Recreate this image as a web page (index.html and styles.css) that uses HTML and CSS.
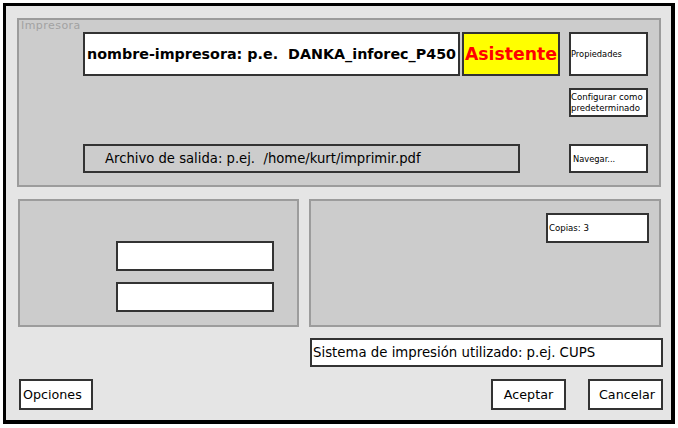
FILE: index.html
```html
<!DOCTYPE html>
<html lang="es">
<head>
<meta charset="utf-8">
<title>Imprimir</title>
<link rel="stylesheet" href="styles.css">
</head>
<body>
<div class="dialog">
  <div class="group printer">
    <div class="legend">Impresora</div>
    <div class="printer-body">
      <div class="printer-main">
        <div class="printer-top">
          <div class="box name">nombre-impresora: p.e.  DANKA_inforec_P450</div>
          <div class="box wizard">Asistente</div>
        </div>
        <div class="box file">Archivo de salida: p.ej.  /home/kurt/imprimir.pdf</div>
      </div>
      <div class="printer-side">
        <div class="box small props">Propiedades</div>
        <div class="box small default">Configurar como<br>predeterminado</div>
        <div class="box small browse">Navegar...</div>
      </div>
    </div>
  </div>
  <div class="row2">
    <div class="group range">
      <div class="box field"></div>
      <div class="box field"></div>
    </div>
    <div class="group copies">
      <div class="box small copies-box">Copias: 3</div>
    </div>
  </div>
  <div class="box system">Sistema de impresión utilizado: p.ej. CUPS</div>
  <div class="buttons">
    <div class="box btn options">Opciones</div>
    <div class="box btn ok">Aceptar</div>
    <div class="box btn cancel">Cancelar</div>
  </div>
</div>
</body>
</html>
```
FILE: styles.css
```css
* { box-sizing: border-box; }
html, body { margin: 0; padding: 0; background: #ffffff; }
body { font-family: "DejaVu Sans", "Liberation Sans", sans-serif; color: #000; }

.dialog {
  margin: 3px;
  width: 672px;
  height: 421px;
  border: 3px solid #000;
  border-right-width: 4px;
  border-bottom-width: 4px;
  background: #e5e5e5;
  padding: 12px 0 0 0;
  display: flex;
  flex-direction: column;
}

.group {
  background: #cccccc;
  border: 2px solid #9c9c9c;
}

.box {
  background: #ffffff;
  border: 2px solid #333333;
  white-space: pre;
}

.printer {
  margin-left: 11px;
  width: 644px;
  height: 169px;
}
.legend {
  height: 12px;
  line-height: 12px;
  font-size: 11px;
  letter-spacing: 0.45px;
  color: #a2a2a2;
  padding-left: 2px;
}
.printer-body {
  display: flex;
  padding-left: 64px;
  padding-right: 11px;
}
.printer-main {
  width: 477px;
  height: 141px;
  display: flex;
  flex-direction: column;
  justify-content: space-between;
}
.printer-top {
  display: flex;
  gap: 2px;
}
.name {
  width: 377px;
  height: 44px;
  font-weight: bold;
  font-size: 14.3px;
  padding-left: 2px;
  display: flex;
  align-items: center;
}
.wizard {
  width: 98px;
  height: 44px;
  background: #ffff00;
  color: #ff0000;
  font-weight: bold;
  font-size: 17.3px;
  display: flex;
  align-items: center;
  justify-content: center;
}
.file {
  width: 437px;
  height: 29px;
  background: #cccccc;
  font-size: 13.2px;
  padding-left: 20px;
  display: flex;
  align-items: center;
}
.printer-side {
  margin-left: 9px;
  width: 79px;
  display: flex;
  flex-direction: column;
}
.small {
  font-size: 8.3px;
  display: flex;
  align-items: center;
}
.props { height: 44px; padding-left: 0; }
.default {
  margin-top: 12px;
  height: 29px;
  font-size: 8.6px;
  line-height: 11px;
  white-space: normal;
  padding-left: 0;
}
.browse { margin-top: 27px; height: 29px; padding-left: 2px; }

.row2 {
  margin-top: 12px;
  margin-left: 12px;
  display: flex;
  gap: 10px;
  height: 128px;
}
.range {
  width: 281px;
  padding: 40px 0 0 96px;
  display: flex;
  flex-direction: column;
  gap: 11px;
}
.field { width: 158px; height: 30px; }
.copies {
  width: 352px;
  padding: 12px 10px 0 0;
  display: flex;
  justify-content: flex-end;
  align-items: flex-start;
}
.copies-box {
  width: 103px;
  height: 30px;
  font-size: 8.6px;
  padding-left: 1px;
}

.system {
  margin-top: 11px;
  margin-left: 304px;
  width: 353px;
  height: 29px;
  font-size: 13.3px;
  padding-left: 1px;
  display: flex;
  align-items: center;
}

.buttons {
  margin-top: 12px;
  display: flex;
  padding-left: 13px;
  padding-right: 8px;
}
.btn {
  height: 31px;
  font-size: 12.7px;
  display: flex;
  align-items: center;
}
.options { width: 74px; padding-left: 2px; }
.ok { margin-left: auto; width: 75px; justify-content: center; }
.cancel { margin-left: 22px; width: 75px; justify-content: center; padding-left: 3px; }
```
